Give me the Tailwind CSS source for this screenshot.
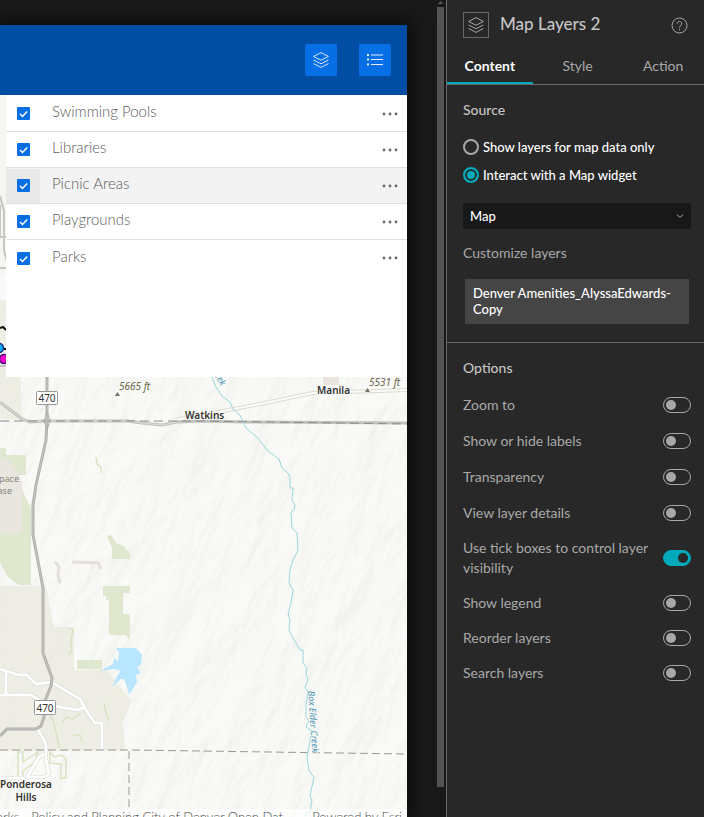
<!DOCTYPE html>
<html lang="en">
<head>
    <meta charset="UTF-8">
    <meta name="viewport" content="width=device-width, initial-scale=1.0">
    <title>Map Layers 2</title>
    <script src="https://cdn.jsdelivr.net/npm/@tailwindcss/browser@4"></script>
</head>
<body class="flex h-screen overflow-hidden bg-[#191919] font-[Lato,'Open_Sans',sans-serif]">

    <!-- App preview -->
    <main class="flex flex-1 min-w-0 overflow-hidden">
        <div class="flex flex-1 min-w-0 flex-col mt-[25px] mr-[30px] shadow-[0_0_16px_4px_rgba(0,0,0,0.6)]">
            <header class="flex h-[70px] shrink-0 items-center justify-end gap-[22px] bg-[#004da3] pr-4">
                <button aria-label="Map layers" class="flex size-8 items-center justify-center rounded-xs bg-[#076fe5]">
                    <svg class="size-4" viewBox="0 0 16 16" fill="none" stroke="#d5e6fb" stroke-width="1"><path d="M8 .6 15.4 4.5 8 8.2.6 4.5zM.6 8 8 11.8 15.4 8M.6 11.6 8 15.4l7.4-3.8"/></svg>
                </button>
                <button aria-label="Legend" class="flex size-8 items-center justify-center rounded-xs bg-[#076fe5]">
                    <svg class="size-4" viewBox="0 0 16 16" fill="#e3effd"><path d="M0 2h2v2H0zM0 6.500h2v2H0zM0 11.500h2v2H0zM4 2.500h12v1H4zM4 7h12v1H4zM4 12h12v1H4z"/></svg>
                </button>
            </header>

            <div class="relative flex flex-1 flex-col justify-between overflow-hidden bg-[#f5f6f1]">
                <!-- Basemap -->
                <svg class="absolute inset-0 size-full" viewBox="0 95 407 722" preserveAspectRatio="xMinYMin slice" font-family="Noto Sans, sans-serif">
                    <defs>
                        <filter id="relief" x="0" y="0" width="100%" height="100%">
                            <feTurbulence type="fractalNoise" baseFrequency="0.035 0.014" numOctaves="4" seed="6"/>
                            <feDiffuseLighting surfaceScale="5" lighting-color="#fff"><feDistantLight azimuth="215" elevation="62"/></feDiffuseLighting>
                            <feComponentTransfer><feFuncR type="linear" slope="0.32" intercept="0.672"/><feFuncG type="linear" slope="0.32" intercept="0.675"/><feFuncB type="linear" slope="0.36" intercept="0.622"/></feComponentTransfer>
                        </filter>
                    </defs>
                    <rect y="95" width="407" height="722" fill="#f5f6f1"/>
                    <rect x="-60" y="0" width="640" height="900" filter="url(#relief)" opacity=".7" transform="rotate(20 200 450)"/>
                    <path d="M0 300h21v119H0zM0 586h46l8 41h20v43h33l25 32-9 20 2 29H0z" fill="#ebe9df" opacity=".75"/>
                    <path d="M323 377h16v8h-16z" fill="#eae6df"/>
                    <path d="M0 448h6v7h20v20h-8l2 10 11 24v76H19L8 577 0 563zM107 536l4-1 5 8 8 3 6 8v5h-18v-11zM103 586h27v7h-7v21h7v26l-4-5h-17v-35h-3v-4h-3zM77 660h25v9H77z" fill="#dfe7cf"/>
                    <path d="M0 458l9 2 9 12 4 10v48l-12 5-10-3z" fill="#e9e5df"/>
                    <path d="M96 457l1 7 4 3v6M68 629h5l-2 12 1 8-3 6M18 752h5v10l15-10-3 10-12 9v6h-5zM50 752l4 5 8-2 4 4v19h-5v-14l-11-1zM62 722l4-5 6 2 8-5M73 735h7l2 7M48 712l5 8 4 16 2 12M104 703l2 10 3 8" fill="none" stroke="#d9e3c4" stroke-width="1.500"/>
                    <path d="M55 562l4 5-1 8 2 8M72 562l26 1 3 6" fill="none" stroke="#e4dfd8" stroke-width="3"/>
                    <path d="M116 648h20l6 7-1 10-4 2 4 6-5 2 1 7-4 7-4 6-1-5-4-11h-3l-9 8 5-11 4-5-6-2-15 2 13-7 1-6 4 3 1-9z" fill="#b9e6ff"/>
                    <!-- Streets -->
                    <g fill="none" stroke-linejoin="round">
                        <g stroke="#d6d4cc" stroke-width="4">
                            <path d="M0 669l18 6h9l9 9 15-2 29 17 6 11 9 13h7v27M6 672v22M0 695h31l8 5M54 706l24 4 7-3M37 728l6 10 3 7v15l3 14-5 3H27l12-20 5-3M0 778h25"/>
                        </g>
                        <g stroke="#fff" stroke-width="3">
                            <path d="M0 669l18 6h9l9 9 15-2 29 17 6 11 9 13h7v27M6 672v22M0 695h31l8 5M54 706l24 4 7-3M37 728l6 10 3 7v15l3 14-5 3H27l12-20 5-3M0 778h25"/>
                        </g>
                        <path d="M0 196l4 15v39l3 12M0 205v32h6M0 268h6M0 366h6" stroke="#c7c6c2" stroke-width="2"/>
                        <path d="M175 420l80-15 58-12 94-3" stroke="#dcd9d2" stroke-width="4"/>
                        <path d="M175 420l80-15 58-12 94-3" stroke="#fcfcf9" stroke-width="2"/>
                        <path d="M0 402l22 17 8 3 14-1h84l14 2 20 2 15-3 25-1 43 1 162 1" stroke="#c0c0bd" stroke-width="3"/>
                        <path d="M0 402l22 17 8 3 14-1h84l14 2 20 2 15-3" stroke="#deddda"/>
                        <path d="M0 421h130l70 0 207 3" stroke="#8e8b85" stroke-dasharray="9 5"/>
                        <path d="M47 377v43l-1 20-10 45-3 20v30l10 53v65l9 25-1 8-6 15-1 16-3 9-5 3H7l-7 7" stroke="#b0afab" stroke-width="3"/>
                        <path d="M47 377v43l-1 20-10 45-3 20v30l10 53v65l9 25-1 8-6 15-1 16-3 9-5 3H7l-7 7" stroke="#c6c5c1"/>
                        <path d="M47 411l3 10-3 9-3-9z" stroke="#b0afab"/>
                        <path d="M0 750h130l277 4M129 751v66" stroke="#9d9995" stroke-dasharray="8 4"/>
                        <!-- Box Elder Creek -->
                        <path d="M212 377L216 387 222 396 230 402 233 409 240 415 246 428 257 437 268 451 279 459 282 468 288 473 290 478 290 488 293 488 292 500 295 505 294 510 291 512 292 528 297 533 298 550 293 560 290 570 289 583 293 590 291 603 288 614 290 620 289 630 293 638 300 650 303 650 303 663 307 668 306 674 308 680 305 687 308 692 306 704 306 716 309 721 306 727 312 731 307 757 309 771 314 777 310 796 312 800 310 812 304 816" stroke="#9ad7df"/>
                    </g>
                    <!-- Route shields -->
                    <g fill="#fff" stroke="#969696" stroke-width="1">
                        <rect x="36.500" y="391.500" width="21" height="13" rx="1"/>
                        <rect x="34.500" y="700.500" width="21" height="14" rx="1"/>
                    </g>
                    <g font-size="10" fill="#333" text-anchor="middle">
                        <text x="47" y="402">470</text>
                        <text x="45" y="712">470</text>
                    </g>
                    <g font-size="10" font-weight="600" fill="#333" stroke="#f8f8f4" stroke-width="2" paint-order="stroke">
                        <text x="185" y="419">Watkins</text>
                        <text x="317" y="394">Manila</text>
                        <text x="26" y="788" text-anchor="middle">Ponderosa</text>
                        <text x="26" y="801" text-anchor="middle">Hills</text>
                    </g>
                    <g font-size="10" font-style="italic" fill="#6a6550" stroke="#f8f8f4" stroke-width="2" paint-order="stroke">
                        <text x="119" y="390">5665 ft</text>
                        <text x="369" y="386">5531 ft</text>
                    </g>
                    <path d="M115 396l2.500-4 2.500 4zM365 392l2.500-4 2.500 4z" fill="#77705f"/>
                    <g font-size="9" fill="#858580">
                        <text x="19" y="482" text-anchor="end">pace</text>
                        <text x="12" y="494" text-anchor="end">ase</text>
                    </g>
                    <g font-size="9" font-style="italic" fill="#4a94b4" stroke="#f8f8f4" stroke-width="1" paint-order="stroke">
                        <text transform="translate(308 691) rotate(86)">Box Elder Creek</text>
                        <text transform="translate(214 375) rotate(58)">eek</text>
                    </g>
                    <path d="M0 328l3-1 3 3M4 349h2" stroke="#111" stroke-width="2" fill="none"/>
                    <circle cx="-1" cy="348" r="4.500" fill="#10aaf5" stroke="#14307e" stroke-width="1.500"/>
                    <circle cx="4" cy="359" r="4.500" fill="#f600c8" stroke="#3d1a7a" stroke-width="1.500"/>
                </svg>

                <!-- Layer list -->
                <ul class="relative ml-1.5 h-[282px] bg-white pt-px text-[15px] text-[#5c5c5c]">
                    <li class="flex h-9 items-center border-b border-[#dfdfdf] pr-2">
                        <label class="flex flex-1 items-center"><span class="flex h-full w-[34px] justify-center"><input type="checkbox" checked class="size-[13px] appearance-none rounded-[1px] bg-[#076fe5]"><svg class="pointer-events-none absolute size-[13px]" viewBox="0 0 13 13" fill="none" stroke="#fff" stroke-width="1.500"><path d="m3 7 2.500 2.500L10.200 4.500"/></svg></span><span class="ml-3 pb-1 font-light">Swimming Pools</span></label>
                        <button aria-label="Swimming Pools options"><svg class="h-4 w-[18px]" viewBox="0 0 18 16" fill="#6a6a6a"><circle cx="3" cy="8" r="1.400"/><circle cx="9" cy="8" r="1.400"/><circle cx="15" cy="8" r="1.400"/></svg></button>
                    </li>
                    <li class="flex h-9 items-center border-b border-[#dfdfdf] pr-2">
                        <label class="flex flex-1 items-center"><span class="flex h-full w-[34px] justify-center"><input type="checkbox" checked class="size-[13px] appearance-none rounded-[1px] bg-[#076fe5]"><svg class="pointer-events-none absolute size-[13px]" viewBox="0 0 13 13" fill="none" stroke="#fff" stroke-width="1.500"><path d="m3 7 2.500 2.500L10.200 4.500"/></svg></span><span class="ml-3 pb-1 font-light">Libraries</span></label>
                        <button aria-label="Libraries options"><svg class="h-4 w-[18px]" viewBox="0 0 18 16" fill="#6a6a6a"><circle cx="3" cy="8" r="1.400"/><circle cx="9" cy="8" r="1.400"/><circle cx="15" cy="8" r="1.400"/></svg></button>
                    </li>
                    <li class="flex h-9 items-center border-b border-[#dfdfdf] bg-[#f3f3f3] pr-2">
                        <label class="flex flex-1 items-center"><span class="flex h-[34px] w-[34px] items-center justify-center bg-[#e9e9e9]"><input type="checkbox" checked class="size-[13px] appearance-none rounded-[1px] bg-[#076fe5]"><svg class="pointer-events-none absolute size-[13px]" viewBox="0 0 13 13" fill="none" stroke="#fff" stroke-width="1.500"><path d="m3 7 2.500 2.500L10.200 4.500"/></svg></span><span class="ml-3 pb-1 font-light">Picnic Areas</span></label>
                        <button aria-label="Picnic Areas options"><svg class="h-4 w-[18px]" viewBox="0 0 18 16" fill="#6a6a6a"><circle cx="3" cy="8" r="1.400"/><circle cx="9" cy="8" r="1.400"/><circle cx="15" cy="8" r="1.400"/></svg></button>
                    </li>
                    <li class="flex h-9 items-center border-b border-[#dfdfdf] pr-2">
                        <label class="flex flex-1 items-center"><span class="flex h-full w-[34px] justify-center"><input type="checkbox" checked class="size-[13px] appearance-none rounded-[1px] bg-[#076fe5]"><svg class="pointer-events-none absolute size-[13px]" viewBox="0 0 13 13" fill="none" stroke="#fff" stroke-width="1.500"><path d="m3 7 2.500 2.500L10.200 4.500"/></svg></span><span class="ml-3 pb-1 font-light">Playgrounds</span></label>
                        <button aria-label="Playgrounds options"><svg class="h-4 w-[18px]" viewBox="0 0 18 16" fill="#6a6a6a"><circle cx="3" cy="8" r="1.400"/><circle cx="9" cy="8" r="1.400"/><circle cx="15" cy="8" r="1.400"/></svg></button>
                    </li>
                    <li class="flex h-9 items-center pr-2">
                        <label class="flex flex-1 items-center"><span class="flex h-full w-[34px] justify-center"><input type="checkbox" checked class="size-[13px] appearance-none rounded-[1px] bg-[#076fe5]"><svg class="pointer-events-none absolute size-[13px]" viewBox="0 0 13 13" fill="none" stroke="#fff" stroke-width="1.500"><path d="m3 7 2.500 2.500L10.200 4.500"/></svg></span><span class="ml-3 pb-1 font-light">Parks</span></label>
                        <button aria-label="Parks options"><svg class="h-4 w-[18px]" viewBox="0 0 18 16" fill="#6a6a6a"><circle cx="3" cy="8" r="1.400"/><circle cx="9" cy="8" r="1.400"/><circle cx="15" cy="8" r="1.400"/></svg></button>
                    </li>
                </ul>

                <!-- Attribution -->
                <div class="relative -mb-2 flex h-4 items-center justify-between bg-white/65 pr-[5px] text-[13px] leading-4 text-[#4c4c4c]">
                    <p class="flex w-[292px] justify-end overflow-hidden whitespace-nowrap font-light">Public Works - Policy and Planning City of Denver Open Dat...</p>
                    <p class="whitespace-nowrap font-light">Powered by Esri</p>
                </div>
            </div>
        </div>

        <!-- Scrollbar -->
        <div class="flex w-[7px] shrink-0 flex-col items-center mr-0.5">
            <svg class="h-[7px] w-[5px]" viewBox="0 0 5 7" fill="#5a5a5a"><path d="M0 4 2.500 1 5 4z"/></svg>
            <div class="mb-[30px] w-full flex-1 bg-[#535353]"></div>
        </div>
    </main>

    <!-- Settings panel -->
    <aside class="flex w-[258px] shrink-0 flex-col border-l border-[#6a6a6a] bg-[#282828] text-sm text-[#a8a8a8]">
        <div class="flex h-[50px] items-center gap-[11px] pl-4 pr-4">
            <span class="flex size-[26px] items-center justify-center border border-[#6a6a6a]">
                <svg class="size-4" viewBox="0 0 16 16" fill="none" stroke="#a8a8a8" stroke-width="1"><path d="M8 .6 15.4 4.5 8 8.200.6 4.500zM.6 8 8 11.800 15.400 8M.6 11.600 8 15.400l7.400-3.800"/></svg>
            </span>
            <h1 class="flex-1 pb-0.5 text-[17px] leading-5 font-medium text-[#c5c5c5]">Map Layers 2</h1>
            <button aria-label="Help"><svg class="size-[17px]" viewBox="0 0 17 17" fill="none" stroke="#a8a8a8"><circle cx="8.500" cy="8.500" r="7.500"/><path d="M6.200 6.700a2.300 2.300 0 1 1 3.700 1.800c-.9.700-1.400 1-1.400 2.200M8.500 12v1.200"/></svg></button>
        </div>
        <nav class="grid h-[35px] grid-cols-3 border-b border-[#6a6a6a] text-center leading-8">
            <button class="border-b-2 border-[#00aabb] font-bold text-white">Content</button>
            <button class="border-b-2 border-transparent pl-1">Style</button>
            <button class="border-b-2 border-transparent pl-1">Action</button>
        </nav>

        <section class="border-b border-[#6a6a6a] pt-[15px] pb-[18px] pl-4 pr-[13px]">
            <h2 class="leading-5 font-medium text-[#c5c5c5]">Source</h2>
            <div class="mt-[17px] flex flex-col gap-2 leading-5 text-[13px] font-medium text-white">
                <label class="flex items-center gap-1"><input type="radio" name="source" class="size-4 appearance-none rounded-full border-2 border-[#a8a8a8]">Show layers for map data only</label>
                <label class="flex items-center gap-1"><input type="radio" name="source" checked class="size-4 appearance-none rounded-full border-2 border-[#00aabb] bg-[#00aabb] shadow-[inset_0_0_0_2px_#282828]">Interact with a Map widget</label>
            </div>
            <div class="relative mt-[18px]">
                <select aria-label="Map widget" class="h-[26px] w-full appearance-none rounded-xs bg-[#181818] px-[7px] text-[13px] font-medium text-white"><option>Map</option></select>
                <svg class="pointer-events-none absolute top-[9px] right-[7px] size-2" viewBox="0 0 8 8" fill="none" stroke="#b5b5b5"><path d="m1 2.500 3 3 3-3"/></svg>
            </div>
            <h3 class="mt-[14px] leading-5">Customize layers</h3>
            <button class="mt-4 mx-0.5 block w-[224px] bg-[#454545] px-2 pt-1.5 pb-[7px] text-left text-[13px] leading-4 font-medium text-white">Denver Amenities_AlyssaEdwards-Copy</button>
        </section>

        <section class="pt-[15px] pl-4 pr-[13px]">
            <h2 class="leading-5 font-medium text-[#c5c5c5]">Options</h2>
            <div class="mt-[17px] flex flex-col gap-4 leading-5">
                <label class="flex items-center justify-between">Zoom to<input type="checkbox" class="h-4 w-7 appearance-none rounded-full border border-[#a8a8a8] before:block before:m-0.5 before:size-2.5 before:rounded-full before:bg-[#a8a8a8]"></label>
                <label class="flex items-center justify-between">Show or hide labels<input type="checkbox" class="h-4 w-7 appearance-none rounded-full border border-[#a8a8a8] before:block before:m-0.5 before:size-2.5 before:rounded-full before:bg-[#a8a8a8]"></label>
                <label class="flex items-center justify-between">Transparency<input type="checkbox" class="h-4 w-7 appearance-none rounded-full border border-[#a8a8a8] before:block before:m-0.5 before:size-2.5 before:rounded-full before:bg-[#a8a8a8]"></label>
                <label class="flex items-center justify-between">View layer details<input type="checkbox" class="h-4 w-7 appearance-none rounded-full border border-[#a8a8a8] before:block before:m-0.5 before:size-2.5 before:rounded-full before:bg-[#a8a8a8]"></label>
            </div>
            <div class="mt-[15px] flex flex-col gap-[15px] leading-5">
                <label class="flex items-center justify-between"><span class="w-[190px]">Use tick boxes to control layer visibility</span><input type="checkbox" checked class="h-4 w-7 appearance-none rounded-full border border-[#00aabb] bg-[#00aabb] before:block before:my-0.5 before:ml-3.5 before:size-2.5 before:rounded-full before:bg-[#282828]"></label>
                <label class="flex items-center justify-between">Show legend<input type="checkbox" class="h-4 w-7 appearance-none rounded-full border border-[#a8a8a8] before:block before:m-0.5 before:size-2.5 before:rounded-full before:bg-[#a8a8a8]"></label>
                <label class="flex items-center justify-between">Reorder layers<input type="checkbox" class="h-4 w-7 appearance-none rounded-full border border-[#a8a8a8] before:block before:m-0.5 before:size-2.5 before:rounded-full before:bg-[#a8a8a8]"></label>
                <label class="flex items-center justify-between">Search layers<input type="checkbox" class="h-4 w-7 appearance-none rounded-full border border-[#a8a8a8] before:block before:m-0.5 before:size-2.5 before:rounded-full before:bg-[#a8a8a8]"></label>
            </div>
        </section>
    </aside>

</body>
</html>
